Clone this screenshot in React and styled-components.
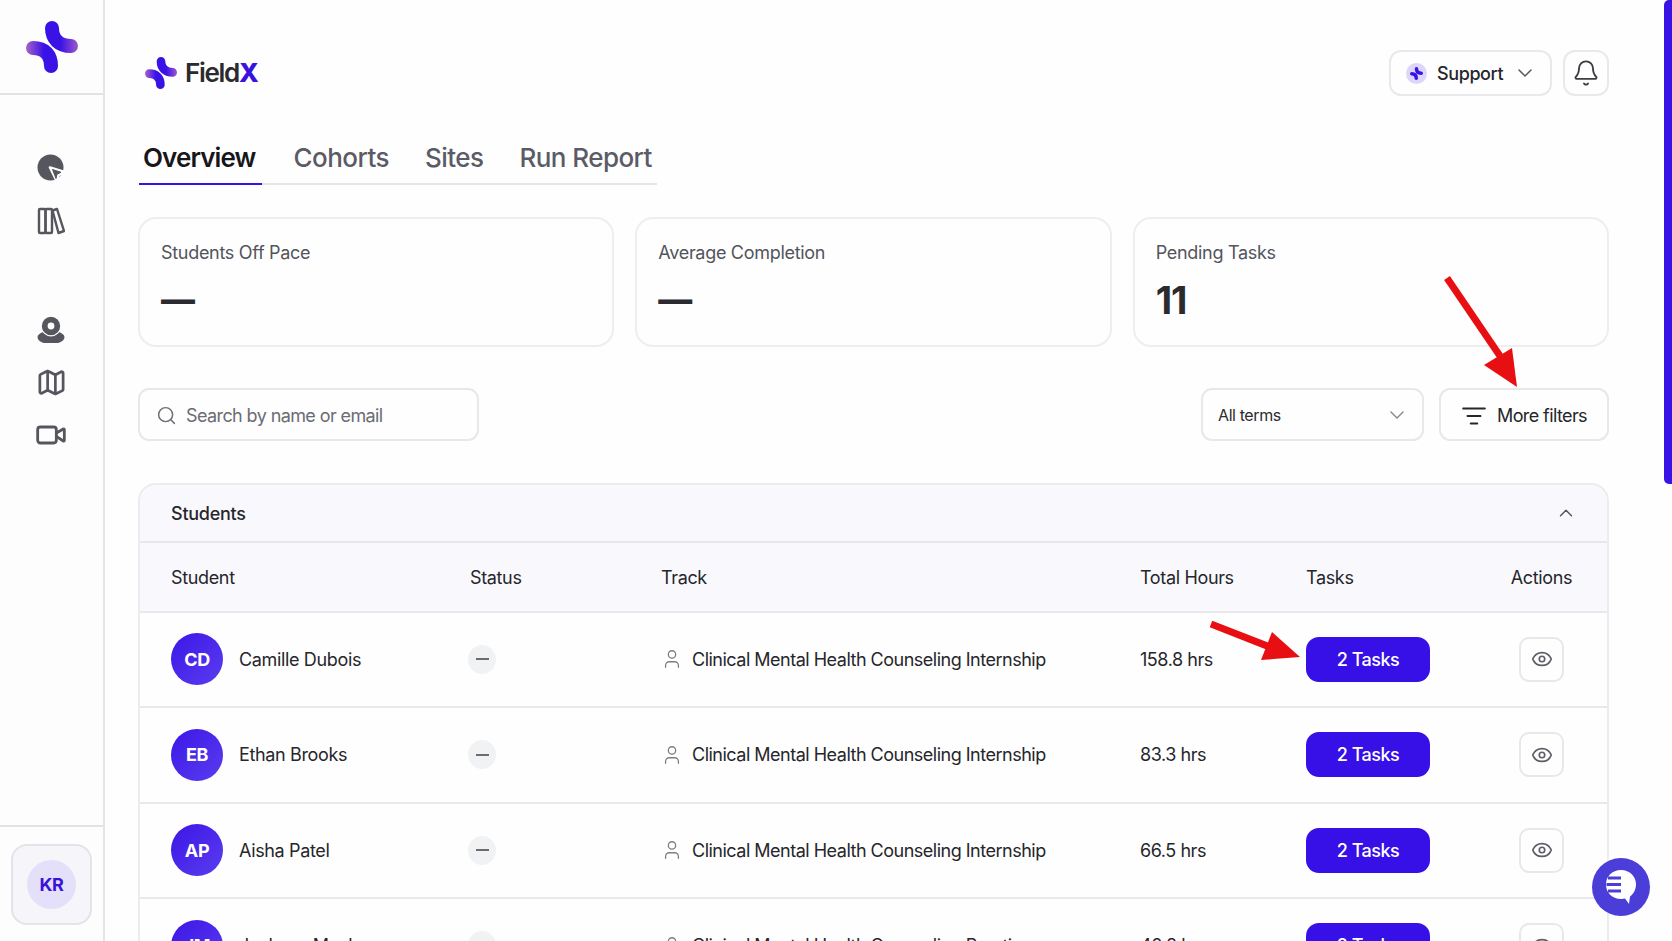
import React from "react";
import styled, { createGlobalStyle } from "styled-components";
import {
  Bell,
  ChevronDown,
  ChevronUp,
  Eye,
  ListFilter,
  Map as MapIcon,
  Search,
  User,
  Video,
} from "lucide-react";

const GlobalStyle = createGlobalStyle`
  html, body {
    margin: 0;
    height: 100%;
    overflow: hidden;
    background: #fefefe;
    font-family: Inter, "Liberation Sans", sans-serif;
    color: #26262b;
  }
  * {
    box-sizing: border-box;
  }
`;

const Page = styled.div`
  position: relative;
  display: flex;
  width: 1672px;
  height: 941px;
  overflow: hidden;
`;

const Sidebar = styled.aside`
  flex: 0 0 105px;
  height: 100%;
  display: flex;
  flex-direction: column;
  background: #fdfdfd;
  border-right: 2px solid #e5e5e8;
`;

const SideLogo = styled.div`
  height: 95px;
  display: flex;
  align-items: flex-start;
  padding: 21px 0 0 26px;
  border-bottom: 2px solid #e3e3e6;
`;

const SideNav = styled.nav`
  display: flex;
  flex-direction: column;
  align-items: center;
  padding-top: ${(p) => p.$top}px;
  padding-right: 1px;
`;

const SideIcon = styled.div`
  width: 100%;
  height: 52.5px;
  display: flex;
  align-items: center;
  justify-content: center;
  color: #55565e;
`;

const SideFooter = styled.div`
  margin-top: auto;
  height: 116px;
  padding: 17px 11px;
  border-top: 2px solid #e3e3e6;
`;

const UserCard = styled.div`
  width: 81px;
  height: 81px;
  display: flex;
  align-items: center;
  justify-content: center;
  background: #f6f6fa;
  border: 2px solid #e4e4e8;
  border-radius: 16px;
`;

const UserBadge = styled.div`
  width: 49px;
  height: 49px;
  border-radius: 50%;
  display: flex;
  align-items: center;
  justify-content: center;
  background: #e5e0fa;
  color: #3a12d8;
  font-size: 18px;
  font-weight: 700;
  letter-spacing: -0.3px;
`;

const Main = styled.main`
  flex: 1;
  min-width: 0;
  padding: 50px 63px 0 33px;
`;

const TopBar = styled.header`
  height: 46px;
  display: flex;
  align-items: center;
  justify-content: space-between;
`;

const Brand = styled.div`
  display: flex;
  align-items: center;
  gap: 8px;
  padding-left: 7px;
  font-size: 26px;
  font-weight: 600;
  letter-spacing: -1.3px;
  color: #2a2a2f;

  div {
    margin-top: -2px;
  }
  b {
    font-weight: 800;
    color: #3a12e0;
  }
`;

const TopActions = styled.div`
  display: flex;
  gap: 11px;
`;

const SupportButton = styled.button`
  width: 163px;
  height: 46px;
  display: flex;
  align-items: center;
  padding: 0 0 0 15px;
  background: #fefefe;
  border: 2px solid #e9e9ec;
  border-radius: 12px;
  font: 500 18px Inter, "Liberation Sans", sans-serif;
  letter-spacing: -0.4px;
  color: #26262b;

  span {
    margin: 0 10px 0 10px;
  }
  svg {
    color: #55565e;
  }
`;

const SupportMark = styled.div`
  width: 21px;
  height: 21px;
  border-radius: 50%;
  background: #ddd6fb;
  display: flex;
  align-items: center;
  justify-content: center;
`;

const BellButton = styled.button`
  width: 46px;
  height: 46px;
  padding: 0;
  display: flex;
  align-items: center;
  justify-content: center;
  background: #fefefe;
  border: 2px solid #e9e9ec;
  border-radius: 12px;
  color: #3b3c44;
`;

const Tabs = styled.div`
  display: inline-flex;
  margin: 42px 0 0 1px;
  border-bottom: 2px solid #e4e4ea;
`;

const Tab = styled.div`
  height: 47px;
  padding: 0 ${(p) => (p.$active ? 6 : 4)}px 6px 4px;
  margin-right: 28px;
  margin-bottom: -2px;
  display: flex;
  align-items: center;
  font-size: 26px;
  font-weight: ${(p) => (p.$active ? 600 : 500)};
  letter-spacing: ${(p) => (p.$active ? -0.9 : -0.55)}px;
  color: ${(p) => (p.$active ? "#17171b" : "#5a5b66")};
  border-bottom: 2px solid ${(p) => (p.$active ? "#3a12e0" : "transparent")};

  &:last-child {
    margin-right: 0;
    padding-right: 5px;
  }
`;

const Cards = styled.section`
  display: grid;
  grid-template-columns: repeat(3, 1fr);
  gap: 21px;
  margin-top: 32px;
`;

const StatCard = styled.div`
  height: 130px;
  padding: 22px 21px;
  background: #fefefe;
  border: 2px solid #eeeef1;
  border-radius: 18px;
`;

const StatLabel = styled.div`
  font-size: 18px;
  line-height: 24px;
  letter-spacing: -0.3px;
  color: #53545c;
`;

const StatValue = styled.div`
  margin-top: 11px;
  font-size: ${(p) => (p.$dash ? 34 : 38)}px;
  line-height: 48px;
  font-weight: ${(p) => (p.$dash ? 800 : 700)};
  letter-spacing: -1px;
  color: #2a2a2f;
`;

const Filters = styled.section`
  display: flex;
  align-items: center;
  gap: 15px;
  margin-top: 41px;
`;

const SearchBox = styled.div`
  width: 341px;
  height: 53px;
  display: flex;
  align-items: center;
  gap: 9px;
  padding: 2px 0 0 16px;
  margin-right: auto;
  border: 2px solid #e8e8eb;
  border-radius: 11px;
  font-size: 18px;
  letter-spacing: -0.6px;
  color: #6b6c73;

  svg {
    color: #6e6f76;
  }
`;

const TermSelect = styled.div`
  width: 223px;
  height: 53px;
  display: flex;
  align-items: center;
  justify-content: space-between;
  padding: 0 13px 0 15px;
  border: 2px solid #e8e8eb;
  border-radius: 11px;
  font-size: 16px;
  letter-spacing: -0.4px;
  color: #2b2b30;

  svg {
    color: #85868c;
  }
`;

const FilterButton = styled.div`
  width: 170px;
  height: 53px;
  display: flex;
  align-items: center;
  gap: 10px;
  padding: 2px 0 0 20px;
  border: 2px solid #e8e8eb;
  border-radius: 11px;
  font-size: 18px;
  letter-spacing: -0.6px;
  color: #26262b;
`;

const TablePanel = styled.section`
  margin-top: 42px;
  background: #fefefe;
  border: 2px solid #ececf0;
  border-bottom: 0;
  border-radius: 18px 18px 0 0;
`;

const PanelHead = styled.div`
  height: 58px;
  display: flex;
  align-items: center;
  justify-content: space-between;
  padding: 0 30px 0 31px;
  background: #f9f9fd;
  border-radius: 16px 16px 0 0;
  border-bottom: 2px solid #e8e8ec;
  font-size: 18px;
  font-weight: 550;
  letter-spacing: -0.25px;
  color: #26262b;

  svg {
    color: #55565e;
  }
`;

const Row = styled.div`
  display: grid;
  grid-template-columns: 299px 191px 479px 166px 170px 1fr;
  align-items: center;
  height: ${(p) => (p.$head ? 69.5 : 95.5)}px;
  padding: ${(p) => (p.$head ? 2 : 0)}px 0 0 31px;
  background: ${(p) => (p.$head ? "#f9f9fd" : "#fefefe")};
  border-bottom: 2px solid #e9e9ec;
  font-size: 18px;
  letter-spacing: -0.35px;
  color: #26262b;
`;

const HeadActions = styled.div`
  text-align: center;
`;

const StudentCell = styled.div`
  display: flex;
  align-items: center;
  gap: 16px;
`;

const Avatar = styled.div`
  width: 52px;
  height: 52px;
  border-radius: 50%;
  display: flex;
  align-items: center;
  justify-content: center;
  background: linear-gradient(135deg, #3c16e6, #5a3df0);
  color: #fff;
  font-size: 18px;
  font-weight: 700;
`;

const StatusPill = styled.div`
  width: 28px;
  height: 29px;
  margin-left: -2px;
  border-radius: 50%;
  display: flex;
  align-items: center;
  justify-content: center;
  background: #f1f2f4;

  &::after {
    content: "";
    width: 13px;
    height: 2px;
    background: #6b6c73;
  }
`;

const TrackCell = styled.div`
  display: flex;
  align-items: center;
  gap: 9px;
  letter-spacing: -0.5px;

  svg {
    color: #7d7e85;
    flex: none;
  }
`;

const HoursCell = styled.div`
  letter-spacing: -0.45px;
`;

const TasksButton = styled.button`
  width: 124px;
  height: 45px;
  padding: 0;
  border: 0;
  border-radius: 13px;
  background: #3610e6;
  color: #fff;
  font: 500 18px Inter, "Liberation Sans", sans-serif;
  letter-spacing: -0.5px;
`;

const ActionCell = styled.div`
  display: flex;
  justify-content: center;
`;

const EyeButton = styled.button`
  width: 45px;
  height: 45px;
  padding: 0;
  display: flex;
  align-items: center;
  justify-content: center;
  background: #fefefe;
  border: 2px solid #e8e8eb;
  border-radius: 10px;
  color: #5d5e66;
`;

const ScrollThumb = styled.div`
  position: absolute;
  top: 0;
  right: 0;
  width: 8px;
  height: 484px;
  background: #3a12e6;
  border-radius: 5px 0 0 5px;
`;

const ChatBubble = styled.div`
  position: absolute;
  left: 1592px;
  top: 858px;
  width: 58px;
  height: 58px;
  border-radius: 50%;
  display: flex;
  align-items: center;
  justify-content: center;
  background: #4a3dd8;
`;

const Annotation = styled.svg`
  position: absolute;
  left: 0;
  top: 0;
  pointer-events: none;
`;

const students = [
  { initials: "CD", name: "Camille Dubois", track: "Clinical Mental Health Counseling Internship", hours: "158.8 hrs" },
  { initials: "EB", name: "Ethan Brooks", track: "Clinical Mental Health Counseling Internship", hours: "83.3 hrs" },
  { initials: "AP", name: "Aisha Patel", track: "Clinical Mental Health Counseling Internship", hours: "66.5 hrs" },
  { initials: "JM", name: "Jackson Mack", track: "Clinical Mental Health Counseling Practice", hours: "40.8 hrs" },
];

const LogoMark = ({ size, id, flat }) => (
  <svg width={size} height={size} viewBox="0 0 52 52" fill="none">
    <defs>
      <linearGradient id={`${id}a`} gradientUnits="userSpaceOnUse" x1="28" y1="0" x2="54" y2="0">
        <stop offset="0.25" stopColor="#3a12e6" />
        <stop offset="1" stopColor="#a862c8" />
      </linearGradient>
      <linearGradient id={`${id}b`} gradientUnits="userSpaceOnUse" x1="0" y1="0" x2="24" y2="0">
        <stop offset="0" stopColor="#a862c8" />
        <stop offset="0.75" stopColor="#3a12e6" />
      </linearGradient>
    </defs>
    <path
      d="M26 7C26 18 33 25 45 25"
      stroke={flat ? "#3a12e6" : `url(#${id}a)`}
      strokeWidth="14"
      strokeLinecap="round"
    />
    <path
      d="M7 27C19 27 25 34 25 45"
      stroke={flat ? "#3a12e6" : `url(#${id}b)`}
      strokeWidth="14"
      strokeLinecap="round"
    />
  </svg>
);

const PieCursorIcon = () => (
  <svg width="28" height="28" viewBox="0 0 28 28">
    <circle cx="13.5" cy="13.5" r="13" fill="currentColor" />
    <path d="M13 13.5L27.5 18L21.5 21L20 27.5Z" fill="#fdfdfd" stroke="#fdfdfd" strokeWidth="2.6" strokeLinejoin="round" />
    <path d="M15.5 15.5L24 18.3L20 20.2L19 24.5Z" fill="currentColor" stroke="currentColor" strokeWidth="1" strokeLinejoin="round" />
  </svg>
);

const BooksIcon = () => (
  <svg width="28" height="28" viewBox="0 0 28 28" fill="none" stroke="currentColor" strokeWidth="2.4" strokeLinejoin="round">
    <rect x="2" y="2" width="6.5" height="24" rx="1" />
    <rect x="8.5" y="2" width="6.5" height="24" rx="1" />
    <path d="M15.5 3.5L20 2L27 24L21.5 26Z" />
  </svg>
);

const WebcamIcon = () => (
  <svg width="28" height="28" viewBox="0 0 28 28">
    <path d="M0.5 21C0.5 19 3 17 6 16C9 21 19 21 22 16C25 17 27.5 19 27.5 21C27.5 24.5 23 27 20 27H8C5 27 0.5 24.5 0.5 21Z" fill="currentColor" />
    <circle cx="14" cy="10" r="9.8" fill="currentColor" stroke="#fdfdfd" strokeWidth="1.2" />
    <circle cx="14" cy="10" r="3.4" fill="#fdfdfd" />
  </svg>
);

const ChatIcon = () => (
  <svg width="32" height="36" viewBox="0 0 32 36">
    <path d="M16 1C7 1 1 7.5 1 15.5S7 30 16 30C17.5 30 19 29.8 20 29.5L24 35L25 27.5C28.5 25 31 20.5 31 15.5C31 7.5 25 1 16 1Z" fill="#fff" />
    <path d="M3 9H16M1.5 15.5H16M3 22H16" stroke="#4a3dd8" strokeWidth="2.8" fill="none" />
  </svg>
);

const App = () => {
  return (
    <Page>
      <GlobalStyle />
      <Sidebar>
        <SideLogo>
          <LogoMark size={52} id="side" />
        </SideLogo>
        <SideNav $top={47}>
          <SideIcon><PieCursorIcon /></SideIcon>
          <SideIcon><BooksIcon /></SideIcon>
        </SideNav>
        <SideNav $top={57}>
          <SideIcon><WebcamIcon /></SideIcon>
          <SideIcon><MapIcon size={31} strokeWidth={2.1} /></SideIcon>
          <SideIcon><Video size={32} strokeWidth={2.1} /></SideIcon>
        </SideNav>
        <SideFooter>
          <UserCard>
            <UserBadge>KR</UserBadge>
          </UserCard>
        </SideFooter>
      </Sidebar>

      <Main>
        <TopBar>
          <Brand>
            <LogoMark size={32} id="brand" />
            <div>
              Field<b>X</b>
            </div>
          </Brand>
          <TopActions>
            <SupportButton>
              <SupportMark>
                <LogoMark size={13} id="support" flat />
              </SupportMark>
              <span>Support</span>
              <ChevronDown size={24} strokeWidth={1.5} />
            </SupportButton>
            <BellButton>
              <Bell size={28} strokeWidth={1.6} />
            </BellButton>
          </TopActions>
        </TopBar>

        <Tabs>
          <Tab $active>Overview</Tab>
          <Tab>Cohorts</Tab>
          <Tab>Sites</Tab>
          <Tab>Run Report</Tab>
        </Tabs>

        <Cards>
          <StatCard>
            <StatLabel>Students Off Pace</StatLabel>
            <StatValue $dash>—</StatValue>
          </StatCard>
          <StatCard>
            <StatLabel>Average Completion</StatLabel>
            <StatValue $dash>—</StatValue>
          </StatCard>
          <StatCard>
            <StatLabel>Pending Tasks</StatLabel>
            <StatValue>11</StatValue>
          </StatCard>
        </Cards>

        <Filters>
          <SearchBox>
            <Search size={21} strokeWidth={1.7} />
            Search by name or email
          </SearchBox>
          <TermSelect>
            All terms
            <ChevronDown size={24} strokeWidth={1.4} />
          </TermSelect>
          <FilterButton>
            <ListFilter size={26} strokeWidth={1.8} />
            More filters
          </FilterButton>
        </Filters>

        <TablePanel>
          <PanelHead>
            Students
            <ChevronUp size={22} strokeWidth={1.6} />
          </PanelHead>
          <Row $head>
            <div>Student</div>
            <div>Status</div>
            <div>Track</div>
            <div>Total Hours</div>
            <div>Tasks</div>
            <HeadActions>Actions</HeadActions>
          </Row>
          {students.map((student) => (
            <Row key={student.initials}>
              <StudentCell>
                <Avatar>{student.initials}</Avatar>
                {student.name}
              </StudentCell>
              <StatusPill />
              <TrackCell>
                <User size={22} strokeWidth={1.4} />
                {student.track}
              </TrackCell>
              <HoursCell>{student.hours}</HoursCell>
              <TasksButton>2 Tasks</TasksButton>
              <ActionCell>
                <EyeButton>
                  <Eye size={22} strokeWidth={1.8} />
                </EyeButton>
              </ActionCell>
            </Row>
          ))}
        </TablePanel>
      </Main>

      <ScrollThumb />
      <ChatBubble>
        <ChatIcon />
      </ChatBubble>

      <Annotation width="1672" height="941" viewBox="0 0 1672 941">
        <path d="M1447 278L1500 356" stroke="#e80f12" strokeWidth="7" fill="none" />
        <path d="M1512 348L1484 365L1517 387Z" fill="#e80f12" />
        <path d="M1211 624L1280 651" stroke="#e80f12" strokeWidth="7" fill="none" />
        <path d="M1272 632L1261 660L1300 657Z" fill="#e80f12" />
      </Annotation>
    </Page>
  );
};

export default App;
